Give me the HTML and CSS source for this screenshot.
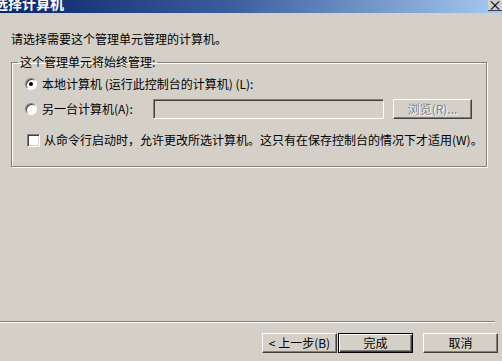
FILE: index.html
```html
<!DOCTYPE html>
<html lang="zh-CN">

<head>
    <meta charset="UTF-8">
    <title>选择计算机</title>
    <link rel="stylesheet" href="styles.css">
</head>

<body>
    <div class="titlebar">
        <span class="title">选择计算机</span>
        <span class="close">×</span>
    </div>
    <div class="page">
        <p class="intro">请选择需要这个管理单元管理的计算机。</p>
        <fieldset class="group">
            <legend>这个管理单元将始终管理:</legend>
            <div class="row row-local">
                <span class="radio checked"></span>
                <label>本地计算机 (运行此控制台的计算机) (L):</label>
            </div>
            <div class="row row-other">
                <span class="radio"></span>
                <label class="other-label">另一台计算机(A):</label>
                <span class="textbox"></span>
                <span class="btn disabled browse">浏览(R)...</span>
            </div>
            <div class="row row-check">
                <span class="check"></span>
                <label>从命令行启动时，允许更改所选计算机。这只有在保存控制台的情况下才适用(W)。</label>
            </div>
        </fieldset>
        <div class="spacer"></div>
        <hr class="sep">
        <div class="buttons">
            <span class="btn">&lt; 上一步(B)</span>
            <span class="btn default">完成</span>
            <span class="btn cancel">取消</span>
        </div>
    </div>
</body>

</html>
```

FILE: styles.css
```css
* {
    box-sizing: border-box;
}

html,
body {
    height: 100%;
}

body {
    margin: 0;
    background-color: #d4d0c8;
    font-family: "Noto Sans CJK SC", "Liberation Sans", sans-serif;
    font-size: 12px;
    line-height: 14px;
    color: #000;
    display: flex;
    flex-direction: column;
    overflow: hidden;
}

.titlebar {
    height: 13px;
    flex: none;
    display: flex;
    justify-content: space-between;
    background: linear-gradient(to right, #0a246a 0%, #3a5c9c 45%, #a6caf0 100%);
    overflow: hidden;
}

.titlebar .title {
    color: #fff;
    font-weight: bold;
    font-size: 14px;
    line-height: 14px;
    margin-top: -4px;
    margin-left: -6px;
}

.titlebar .close {
    width: 14px;
    height: 11px;
    background-color: #d4d0c8;
    border-bottom: 1px solid #404040;
    font-size: 14px;
    line-height: 9px;
    text-align: center;
    overflow: hidden;
}

.page {
    flex: 1;
    display: flex;
    flex-direction: column;
}

.intro {
    margin: 19px 0 0 11px;
}

.group {
    margin: 9px 15px 0 11px;
    padding: 5px 0 16px 0;
    min-width: 0;
    border: 1px solid #808080;
    box-shadow: inset 1px 1px 0 #fff, 1px 1px 0 #fff;
}

.group legend {
    margin-left: 6px;
    padding: 0 2px;
    line-height: 14px;
}

.row {
    display: flex;
    align-items: center;
    height: 20px;
}

.row-local {
    padding-left: 13px;
}

.row-other {
    margin-top: 5px;
    padding-left: 13px;
}

.row-check {
    margin-top: 11px;
    padding-left: 15px;
}

.radio {
    width: 12px;
    height: 12px;
    margin-right: 5px;
    border-radius: 50%;
    border: 1px solid;
    border-color: #808080 #fff #fff #808080;
    box-shadow: inset 1px 1px 0 #404040;
    background-color: #fff;
    display: flex;
    align-items: center;
    justify-content: center;
}

.radio.checked::after {
    content: "";
    width: 4px;
    height: 4px;
    border-radius: 50%;
    background-color: #000;
}

.check {
    width: 13px;
    height: 13px;
    margin-right: 4px;
    border: 1px solid;
    border-color: #808080 #fff #fff #808080;
    box-shadow: inset 1px 1px 0 #404040, inset -1px -1px 0 #d4d0c8;
    background-color: #fff;
}

.other-label {
    width: 111px;
}

.textbox {
    width: 231px;
    height: 20px;
    border: 1px solid;
    border-color: #808080 #fff #fff #808080;
    box-shadow: inset 1px 1px 0 #404040, inset -1px -1px 0 #d4d0c8;
}

.btn {
    width: 75px;
    height: 20px;
    display: flex;
    align-items: center;
    justify-content: center;
    background-color: #d4d0c8;
    border: 1px solid;
    border-color: #fff #404040 #404040 #fff;
    box-shadow: inset -1px -1px 0 #808080;
}

.btn.disabled {
    color: #808080;
    text-shadow: 1px 1px 0 #fff;
}

.browse {
    width: 79px;
    margin-left: 9px;
}

.spacer {
    flex: 1;
}

.sep {
    margin: 0 7px 0 0;
    border: none;
    border-top: 1px solid #808080;
    border-bottom: 1px solid #fff;
}

.buttons {
    display: flex;
    padding: 10px 0 8px 262px;
}

.btn.default {
    margin-left: 1px;
    border: 1px solid #000;
    box-shadow: inset 1px 1px 0 #fff, inset -1px -1px 0 #404040, inset -2px -2px 0 #808080;
}

.btn.cancel {
    margin-left: 10px;
}
```
